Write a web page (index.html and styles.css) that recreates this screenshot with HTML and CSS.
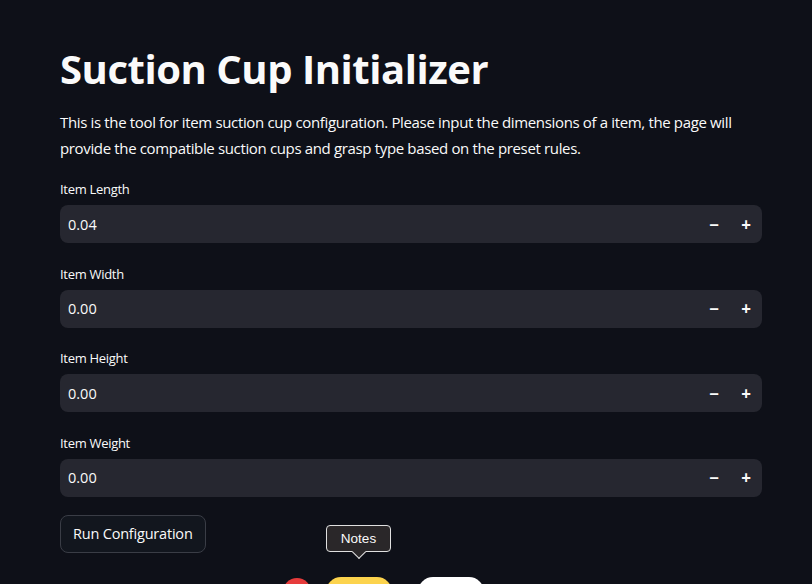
FILE: index.html
```html
<!DOCTYPE html>
<html>
<head>
<meta charset="utf-8">
<link rel="stylesheet" href="styles.css">
</head>
<body>
<main class="main">
  <h1 class="title">Suction Cup Initializer</h1>
  <p class="desc">This is the tool for item suction cup configuration. Please input the dimensions of a item, the page will provide the compatible suction cups and grasp type based on the preset rules.</p>
  <div class="field">
    <label class="label">Item Length</label>
    <div class="input"><span class="value">0.04</span><span class="step">&minus;</span><span class="step">+</span></div>
  </div>
  <div class="field">
    <label class="label">Item Width</label>
    <div class="input"><span class="value">0.00</span><span class="step">&minus;</span><span class="step">+</span></div>
  </div>
  <div class="field">
    <label class="label">Item Height</label>
    <div class="input"><span class="value">0.00</span><span class="step">&minus;</span><span class="step">+</span></div>
  </div>
  <div class="field">
    <label class="label">Item Weight</label>
    <div class="input"><span class="value">0.00</span><span class="step">&minus;</span><span class="step">+</span></div>
  </div>
  <button class="btn">Run Configuration</button>
</main>
<div class="dock">
  <span class="dot"></span>
  <span class="pill yellow"><span class="tip">Notes</span></span>
  <span class="pill white"></span>
</div>
</body>
</html>
```
FILE: styles.css
```css
html, body {
  margin: 0;
  padding: 0;
  background: #0e1018;
  height: 100%;
  overflow: hidden;
}
body {
  font-family: "Open Sans", "Noto Sans", sans-serif;
  color: #fafafa;
  position: relative;
}
.main {
  width: 702px;
  margin: 0 auto 0 60px;
  padding-top: 44px;
  display: flex;
  flex-direction: column;
}
.title {
  margin: 0;
  font-size: 40px;
  font-weight: 700;
  line-height: 50px;
  letter-spacing: -0.45px;
}
.desc {
  margin: 15px 0 0;
  font-size: 15px;
  line-height: 26px;
  letter-spacing: -0.35px;
}
.field {
  margin-top: 18px;
  display: flex;
  flex-direction: column;
}
.field + .field { margin-top: 20.5px; }
.label {
  font-size: 13px;
  line-height: 20px;
  height: 20px;
  margin-bottom: 6px;
  letter-spacing: -0.3px;
}
.input {
  height: 38px;
  background: #262730;
  border-radius: 8px;
  display: flex;
  align-items: center;
  padding-left: 8px;
}
.value {
  flex: 1;
  font-size: 14.5px;
}
.step {
  width: 32px;
  text-align: center;
  font-size: 17px;
  font-weight: 700;
}
.btn {
  align-self: flex-start;
  margin-top: 18px;
  height: 38px;
  padding: 0 12px;
  background: #12161e;
  border: 1px solid #3a3d46;
  border-radius: 8px;
  color: #fafafa;
  font-family: "Open Sans", "Noto Sans", sans-serif;
  font-size: 14.5px;
  letter-spacing: -0.2px;
}
.dock {
  position: absolute;
  left: 283px;
  top: 577px;
  display: flex;
  align-items: flex-start;
  gap: 26px;
}
.dot {
  width: 28px;
  height: 28px;
  border-radius: 50%;
  background: #e63b3b;
  margin-top: 1px;
  margin-right: -11px;
}
.pill {
  position: relative;
  width: 66px;
  height: 30px;
  border-radius: 15px;
}
.yellow { background: #fcd34d; }
.white { background: #ffffff; }
.tip {
  position: absolute;
  left: 0;
  bottom: 55px;
  width: 65px;
  height: 27px;
  background: #2a2729;
  border: 1px solid #e0e0e0;
  border-radius: 4px;
  box-sizing: border-box;
  font-size: 13.5px;
  line-height: 25px;
  text-align: center;
  color: #fafafa;
  font-family: "Liberation Sans", Arial, sans-serif;
}
.tip::after {
  content: "";
  position: absolute;
  left: 50%;
  bottom: -6px;
  width: 9px;
  height: 9px;
  background: #2a2729;
  border-right: 1px solid #e0e0e0;
  border-bottom: 1px solid #e0e0e0;
  transform: translateX(-50%) rotate(45deg);
}
```
